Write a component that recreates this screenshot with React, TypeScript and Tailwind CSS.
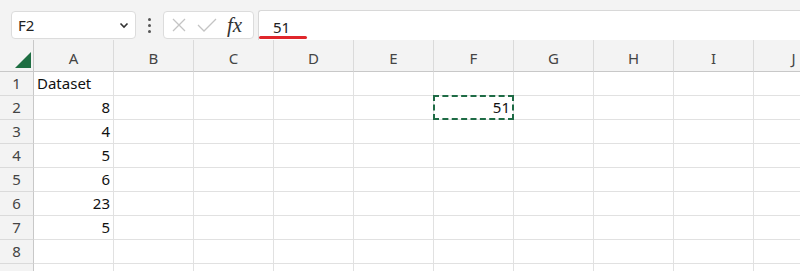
import React from 'react';

const cols = ["A", "B", "C", "D", "E", "F", "G", "H", "I", "J"]
const data: Record<number, Record<string, string>> = {
    1: {A: "Dataset"},
    2: {A: "8", F: "51"},
    3: {A: "4"},
    4: {A: "5"},
    5: {A: "6"},
    6: {A: "23"},
    7: {A: "5"},
}
const rows = [1, 2, 3, 4, 5, 6, 7, 8, 9]

const App = () => {
    return (
        <div className="w-[800px] h-[271px] overflow-hidden bg-white text-[#222]" style={{fontFamily: '"Noto Sans", "Open Sans", sans-serif'}}>
            {/* formula bar */}
            <div className="flex h-[40px] bg-[#f3f3f3] pl-[11px]">
                <div className="mt-[11px] h-[28px] w-[125px] rounded-[4px] border border-[#dcdcdc] bg-white flex items-center justify-between pl-[6px] pr-[5px]">
                    <span className="text-[15px] text-[#222]">F2</span>
                    <svg width="12" height="12" viewBox="0 0 12 12"><path d="M2.5 4.5 L6 8 L9.5 4.5" fill="none" stroke="#333" strokeWidth="1.6"/></svg>
                </div>
                <div className="w-[27px] flex flex-col items-center justify-center gap-[3px] pt-[11px]">
                    <span className="w-[3px] h-[3px] rounded-full bg-[#555]"></span>
                    <span className="w-[3px] h-[3px] rounded-full bg-[#555]"></span>
                    <span className="w-[3px] h-[3px] rounded-full bg-[#555]"></span>
                </div>
                <div className="mt-[11px] h-[28px] w-[91px] rounded-[4px] border border-[#dcdcdc] bg-white flex items-center pl-[7px]">
                    <svg width="16" height="16" viewBox="0 0 16 16"><path d="M2 2 L14 14 M14 2 L2 14" stroke="#c4c4c4" strokeWidth="1.3"/></svg>
                    <svg width="22" height="16" viewBox="0 0 22 16" className="ml-[9px]"><path d="M2 8 L8 14 L20 2" fill="none" stroke="#c4c4c4" strokeWidth="1.3"/></svg>
                    <span className="ml-[9px] italic text-[21px] leading-none text-[#333]" style={{fontFamily: '"Liberation Serif", serif'}}>fx</span>
                </div>
                <div className="ml-[4px] mt-[10px] flex-1 relative bg-white border-t border-l border-[#d8d8d8] rounded-tl-[3px]">
                    <span className="absolute left-[14px] top-[5px] text-[15px] text-[#222]">51</span>
                    <span className="absolute left-0 bottom-[1px] w-[48px] h-[3px] rounded-full bg-[#e0262b]"></span>
                </div>
            </div>

            {/* grid */}
            <div className="grid grid-cols-[34px_repeat(10,80px)]">
                <div className="h-[32px] bg-[#f3f3f3] border-r border-b border-[#c8c8c8] relative">
                    <svg width="16" height="16" viewBox="0 0 16 16" className="absolute left-[15px] top-[12px]"><path d="M16 0 L16 16 L0 16 Z" fill="#1e6e42"/></svg>
                </div>
                {cols.map(c => (
                    <div key={c} className="h-[32px] bg-[#f3f3f3] border-r border-r-[#dadada] border-b border-b-[#c8c8c8] flex items-end justify-center pb-[2px] text-[15px] text-[#444]">{c}</div>
                ))}
                {rows.map(r => (
                    <React.Fragment key={r}>
                        <div className="h-[24px] bg-[#f3f3f3] border-r border-[#c8c8c8] border-b border-b-[#dadada] flex items-center justify-center text-[15px] text-[#444]">{r}</div>
                        {cols.map(c => {
                            const v = data[r]?.[c]
                            const isNum = v !== undefined && !isNaN(Number(v))
                            return (
                                <div key={c} className={`h-[24px] relative border-r border-b border-[#e1e1e1] flex items-center text-[15px] text-[#111] px-[3px] ${isNum ? 'justify-end' : 'justify-start'}`}>
                                    {v}
                                    {r === 2 && c === "F" && (
                                        <span className="absolute -left-[1px] -top-[1px] -right-[1px] -bottom-[1px] border-2 border-dashed border-[#1e6b45]"></span>
                                    )}
                                </div>
                            )
                        })}
                    </React.Fragment>
                ))}
            </div>
        </div>
    );
};

export default App;
